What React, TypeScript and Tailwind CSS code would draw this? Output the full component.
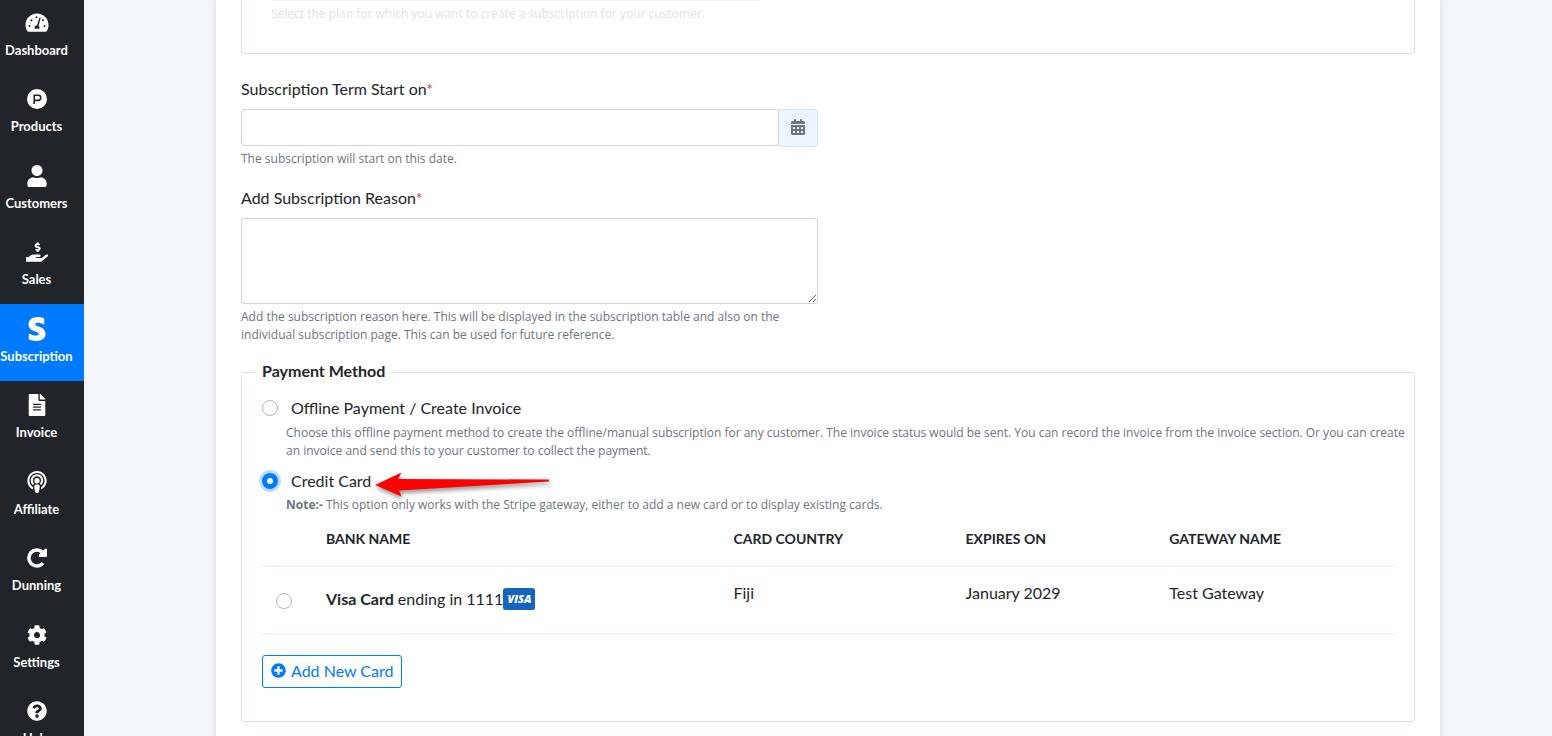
import { useState } from "react";
import type { ComponentType } from "react";
import {
  FaCalendarAlt,
  FaCog,
  FaFileAlt,
  FaHandHoldingUsd,
  FaPlusCircle,
  FaPodcast,
  FaQuestionCircle,
  FaStripeS,
  FaUser,
} from "react-icons/fa";

interface IconProps {
  className?: string;
}

function GaugeIcon({ className }: IconProps) {
  return (
    <svg viewBox="0 0 24 20" className={className} fill="currentColor">
      <path d="M12 0.5C5.6 0.5 0.5 5.7 0.5 12c0 2.2.6 4.3 1.7 6 .3.5.7.7 1.3.7h17c.6 0 1-.2 1.3-.7 1.1-1.7 1.7-3.8 1.7-6C23.5 5.7 18.4.5 12 .5z" />
      <g fill="#212529">
        <circle cx="4.5" cy="13" r="1" />
        <circle cx="6.5" cy="7.2" r="1" />
        <circle cx="11.5" cy="4.2" r="1" />
        <circle cx="18" cy="7.2" r="1" />
        <circle cx="19.5" cy="13" r="1" />
        <path d="M14.6 4.2l1.2.4-2.2 8.2c.6.5.9 1.1.9 1.9 0 .4-.1.7-.2 1H9.700c-.1-.3-.2-.6-.2-1 0-1.300 1.100-2.400 2.500-2.400z" />
      </g>
    </svg>
  );
}

function ProductIcon({ className }: IconProps) {
  return (
    <svg viewBox="0 0 20 20" className={className}>
      <circle cx="10" cy="10" r="10" fill="currentColor" />
      <path d="M7.2 15V6.2h4a2.6 2.6 0 0 1 0 5.2H7.2" fill="none" stroke="#212529" strokeWidth="1.6" />
    </svg>
  );
}

function RedoIcon({ className }: IconProps) {
  return (
    <svg viewBox="0 0 20 20" className={className}>
      <path d="M16 15.2A8 8 0 1 1 15.5 4.3" fill="none" stroke="currentColor" strokeWidth="3.6" />
      <path d="M20 1v7.2a.8.8 0 0 1-.8.8H12V6.5L18.3.5z" fill="currentColor" />
    </svg>
  );
}

interface NavItem {
  label: string;
  icon: ComponentType<IconProps>;
  iconClass?: string;
}

const NAV: NavItem[] = [
  { label: "Dashboard", icon: GaugeIcon, iconClass: "h-5 w-6" },
  { label: "Products", icon: ProductIcon },
  { label: "Customers", icon: FaUser, iconClass: "h-[22px] w-5" },
  { label: "Sales", icon: FaHandHoldingUsd, iconClass: "h-[22px] w-[22px]" },
  { label: "Subscription", icon: FaStripeS, iconClass: "h-6 w-6" },
  { label: "Invoice", icon: FaFileAlt, iconClass: "h-[22px] w-[22px]" },
  { label: "Affiliate", icon: FaPodcast, iconClass: "h-[22px] w-[22px]" },
  { label: "Dunning", icon: RedoIcon },
  { label: "Settings", icon: FaCog },
  { label: "Help", icon: FaQuestionCircle },
];

function Sidebar() {
  return (
    <nav className="w-[84px] shrink-0 bg-[#212529]">
      {NAV.map(({ label, icon: Icon, iconClass }, i) => (
        <a
          key={label}
          href="#"
          className={`flex flex-col items-center pr-[11px] text-white ${i === 0 ? "h-[74px]" : "h-[77px]"} ${i > 0 && i % 2 === 0 ? "-mb-px" : ""} ${label === "Subscription" ? "bg-[#007bff]" : ""}`}
        >
          <span className={`flex h-6 items-center justify-center ${i === 0 ? "mt-[11px]" : "mt-[13px]"}`}>
            <Icon className={iconClass ?? "h-5 w-5"} />
          </span>
          <span className="mt-[6px] text-[13px] leading-[18px] font-bold">{label}</span>
        </a>
      ))}
    </nav>
  );
}

function VisaBadge() {
  return (
    <svg viewBox="0 0 32 24" className="h-6 w-8" role="img" aria-label="Visa">
      <rect y="1" width="32" height="22" rx="2.5" fill="#1565c0" />
      <text x="16.5" y="16" textAnchor="middle" fill="#fff" fontFamily="Open Sans, sans-serif" fontSize="11" fontWeight="800" fontStyle="italic">
        VISA
      </text>
      <path d="M3.5 8h3l1.3 3C6.3 9.5 5.2 8.6 3.5 8z" fill="#f9a825" />
    </svg>
  );
}

// Red pointer laid over the form
function Pointer() {
  return (
    <svg viewBox="0 0 184 36" className="pointer-events-none absolute top-0 left-[111px] h-9 w-[184px] drop-shadow-[1px_3px_2px_rgba(0,0,0,0.4)]">
      <path d="M2 16L28.5 3.5L25 10L176 10.5V12.5L26 21.5L28.5 27.5z" fill="#fe0000" />
    </svg>
  );
}

const radioClass =
  "h-4 w-4 shrink-0 appearance-none rounded-full border border-[#adb5bd] bg-white checked:border-[5px] checked:border-[#007bff] checked:shadow-[0_0_0_3px_#bfdeff]";

const helpClass = "font-['Open_Sans',sans-serif] text-[12px] leading-[18px]";

export default function App() {
  const [startDate, setStartDate] = useState("");
  const [reason, setReason] = useState("");
  const [method, setMethod] = useState("card");

  return (
    <div className="flex h-screen overflow-hidden bg-[#f3f7fa] font-[Lato,sans-serif] text-[16px] leading-6 text-[#212529]">
      <Sidebar />
      <main className="flex-1 pr-[112px] pl-[132px]">
        <div className="min-h-full bg-white px-[25px] pb-10 shadow-[0_0_8px_rgba(0,0,0,0.12)]">
          {/* Plan */}
          <section className="h-[54px] rounded-b border border-t-0 border-[#d6e0fb] px-[29px]">
            <div className="h-px w-[489px] bg-[#f0f0f0]" />
            <p className={`mt-1 text-[#e1e3e5] ${helpClass}`}>
              Select the plan for which you want to create a subscription for your customer.
            </p>
          </section>

          {/* Start date */}
          <div className="mt-[23px] max-w-[577px]">
            <label htmlFor="start">
              Subscription Term Start on<span className="text-[#dc3545]">*</span>
            </label>
            <div className="mt-2 flex items-start">
              <input
                id="start"
                type="text"
                className="h-[37px] min-w-0 flex-1 rounded-[3px] border border-[#ced4da] px-3 focus:outline-none"
                value={startDate}
                onChange={(e) => setStartDate(e.target.value)}
              />
              <button
                type="button"
                aria-label="Pick a date"
                className="-ml-px flex h-[38px] w-10 items-center justify-center rounded-[3px] border border-[#d8e2ee] bg-[#edf6ff] pb-[2px] text-[#6c757d]"
              >
                <FaCalendarAlt className="h-4 w-4" />
              </button>
            </div>
            <p className={`mt-[3px] text-[#6c757d] ${helpClass}`}>The subscription will start on this date.</p>
          </div>

          {/* Reason */}
          <div className="mt-[18px] max-w-[577px]">
            <label htmlFor="reason">
              Add Subscription Reason<span className="text-[#dc3545]">*</span>
            </label>
            <textarea
              id="reason"
              className="mt-2 block h-[86px] w-full resize rounded-[3px] border border-[#ced4da] px-3 py-2 focus:outline-none"
              value={reason}
              onChange={(e) => setReason(e.target.value)}
            />
            <p className={`mt-1 text-[#6c757d] ${helpClass}`}>
              Add the subscription reason here. This will be displayed in the subscription table and also on the
              individual subscription page. This can be used for future reference.
            </p>
          </div>

          {/* Payment method */}
          <fieldset className="mt-4 rounded border border-[#d6e0fb] px-5 pb-[33px]">
            <legend className="-ml-[5px] px-[5px] pb-[2px] leading-[22px] font-bold">Payment Method</legend>

            <div className="mt-3 flex items-center gap-[13px]">
              <input id="offline" type="radio" name="method" className={radioClass} checked={method === "offline"} onChange={() => setMethod("offline")} />
              <label htmlFor="offline">Offline Payment / Create Invoice</label>
            </div>
            <p className={`mt-1 -mr-4 pl-6 text-[#6c757d] ${helpClass}`}>
              Choose this offline payment method to create the offline/manual subscription for any customer. The invoice
              status would be sent. You can record the invoice from the invoice section. Or you can create an invoice and
              send this to your customer to collect the payment.
            </p>

            <div className="relative mt-[9px] flex items-center gap-[13px]">
              <input id="card" type="radio" name="method" className={radioClass} checked={method === "card"} onChange={() => setMethod("card")} />
              <label htmlFor="card">Credit Card</label>
              <Pointer />
            </div>
            <p className={`mt-[3px] pl-6 text-[#6c757d] ${helpClass}`}>
              <b>Note:-</b> This option only works with the Stripe gateway, either to add a new card or to display existing
              cards.
            </p>

            <table className="w-full table-fixed text-left">
              <colgroup>
                <col className="w-[52px]" />
                <col className="w-[36%]" />
                <col className="w-[20.5%]" />
                <col className="w-[18%]" />
                <col />
              </colgroup>
              <thead>
                <tr className="h-[52px] border-b-2 border-[#ebf5ff] text-[14px] leading-6">
                  <th />
                  <th className="px-3 pb-[2px] font-bold">BANK NAME</th>
                  <th className="px-3 pb-[2px] font-bold">CARD COUNTRY</th>
                  <th className="px-3 pb-[2px] font-bold">EXPIRES ON</th>
                  <th className="px-3 pb-[2px] font-bold">GATEWAY NAME</th>
                </tr>
              </thead>
              <tbody>
                <tr className="h-[68px] border-b-2 border-[#ebf5ff] align-top">
                  <td className="pt-6 pl-[14px]">
                    <input type="radio" name="saved-card" aria-label="Visa Card ending in 1111" className={radioClass} />
                  </td>
                  <td className="px-3 pt-5">
                    <div className="flex items-center">
                      <span>
                        <b>Visa Card</b> ending in 1111
                      </span>
                      <VisaBadge />
                    </div>
                  </td>
                  <td className="px-3 pt-[14px]">Fiji</td>
                  <td className="px-3 pt-[14px]">January 2029</td>
                  <td className="px-3 pt-[14px]">Test Gateway</td>
                </tr>
              </tbody>
            </table>

            <button
              type="button"
              className="mt-5 flex h-[33px] items-center gap-[5px] rounded-[3px] border border-[#007bff] px-2 pb-[2px] text-[#007bff]"
            >
              <FaPlusCircle className="h-[15px] w-[15px]" />
              Add New Card
            </button>
          </fieldset>
        </div>
      </main>
    </div>
  );
}
